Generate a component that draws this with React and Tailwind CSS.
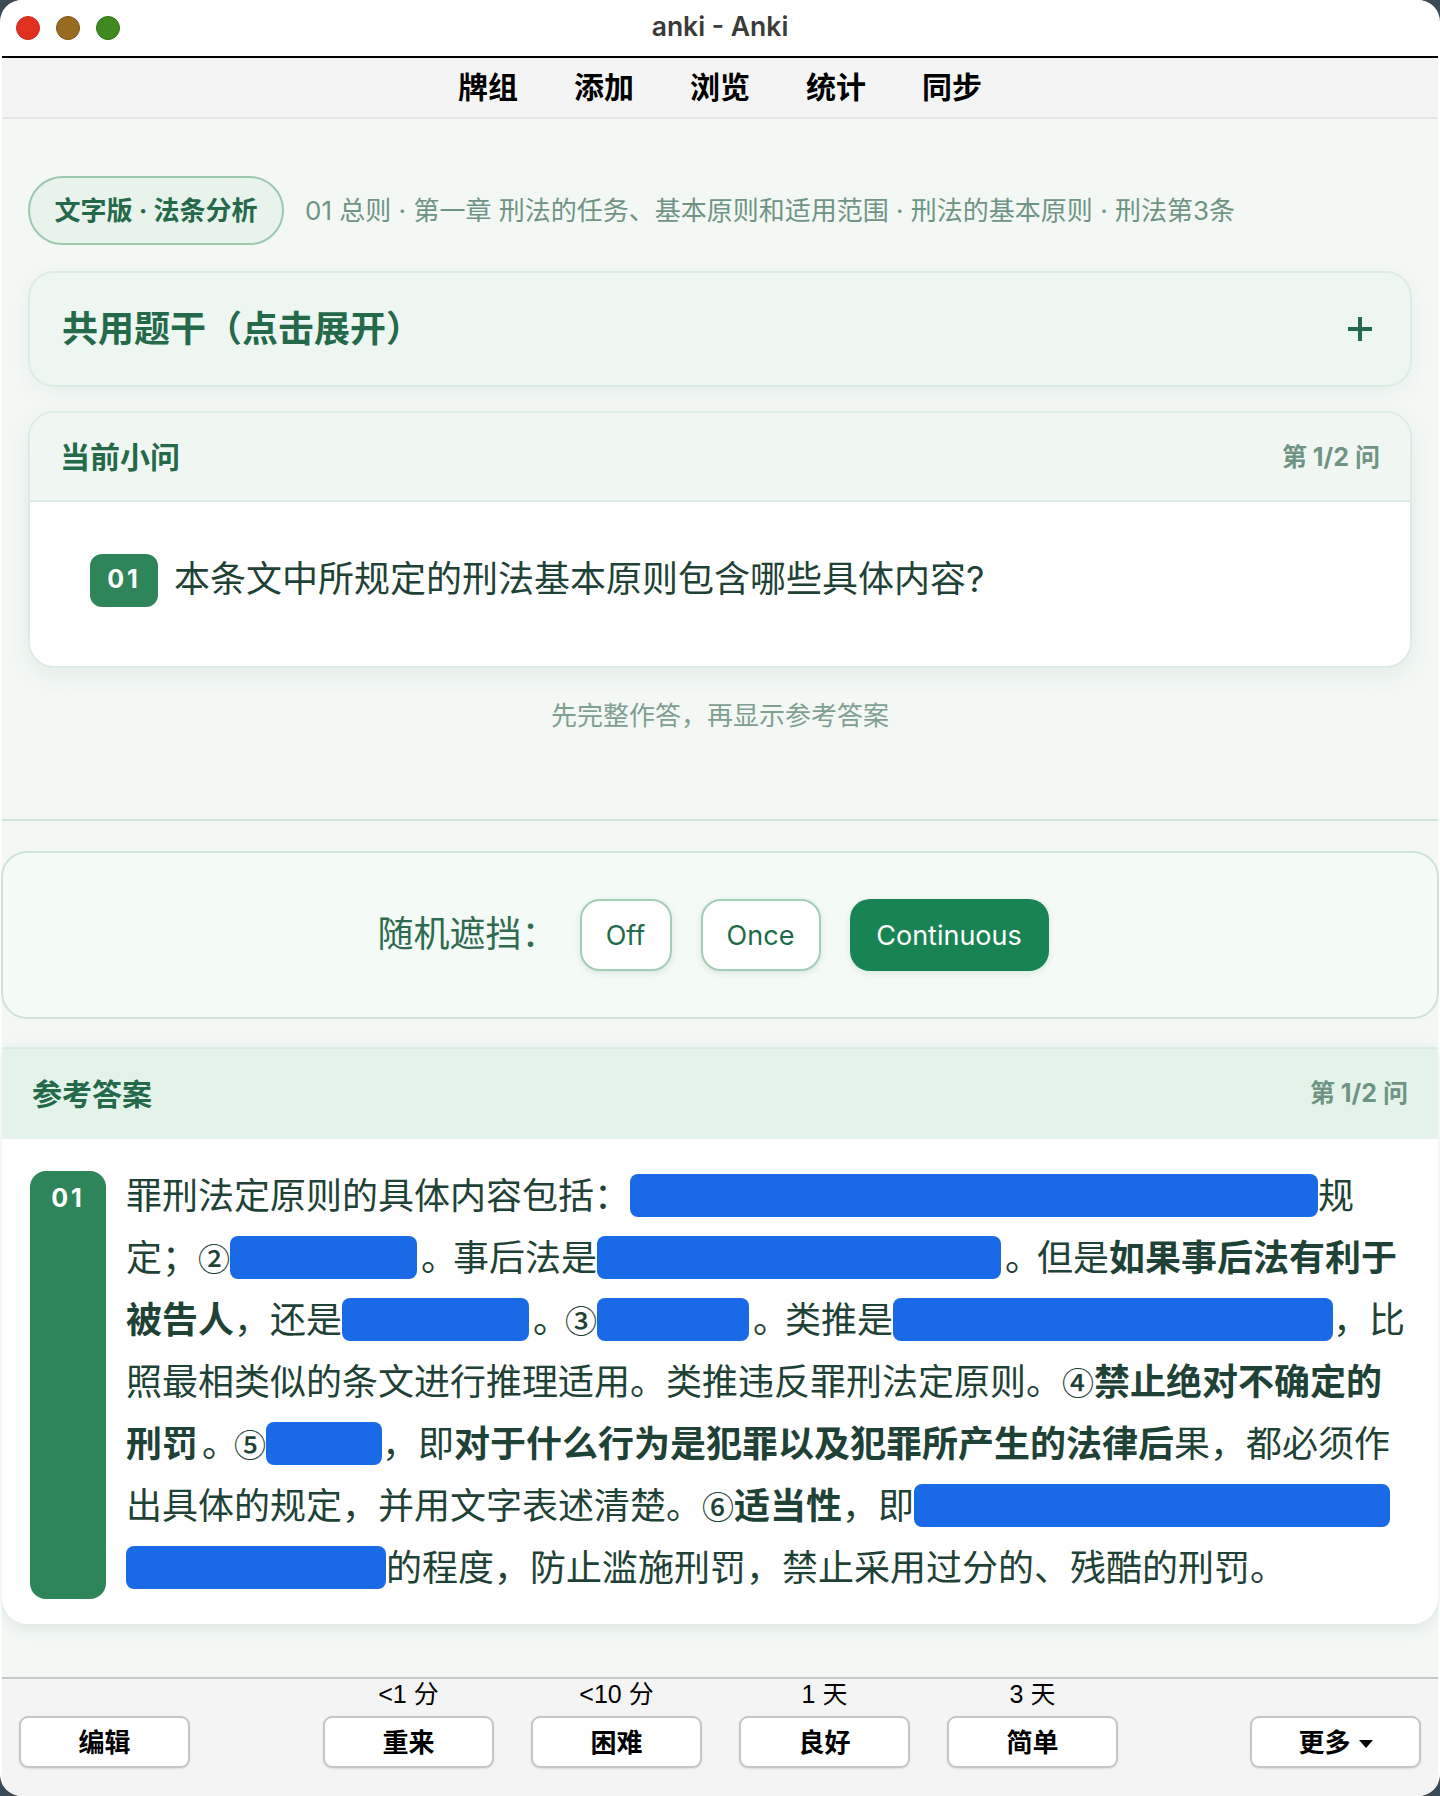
const cjk = "font-['Inter','Noto_Sans_CJK_SC',sans-serif]";

function Blank({ className }) {
  return <span className={`inline-block h-[43px] rounded-[8px] bg-[#1a6ae8] align-[-8px] ${className}`} />;
}

function Num({ children }) {
  return (
    <span className="inline-block w-[32px] text-center font-['Noto_Sans_CJK_SC',sans-serif] text-[32px] font-medium leading-none">
      {children}
    </span>
  );
}

function Stop() {
  return <span className="inline-block w-[36px] pl-[4px]">。</span>;
}

function ChoiceButton({ label, active, className }) {
  return (
    <button
      className={`h-[72px] rounded-[20px] px-[24px] pt-[2px] text-[27px] shadow-[0_2px_6px_rgba(30,80,60,0.12)] ${
        active ? "bg-[#188454] text-white" : "border-2 border-[#a3cdb4] bg-white text-[#1f6a4a]"
      } ${className}`}
    >
      {label}
    </button>
  );
}

function BarButton({ children }) {
  return (
    <button className="flex h-[52px] w-[171px] items-center justify-center rounded-[9px] border-2 border-[#c6c6c6] bg-white text-[26px] font-semibold text-black shadow-[0_1px_2px_rgba(0,0,0,0.1)]">
      {children}
    </button>
  );
}

function Answer({ due, label }) {
  return (
    <div className="flex w-[171px] flex-col items-center">
      <div className="flex h-[37px] items-center pb-[6px] font-['Liberation_Sans','Noto_Sans_CJK_SC',sans-serif] text-[25px] leading-none text-black">
        {due}
      </div>
      <BarButton>{label}</BarButton>
    </div>
  );
}

export default function App() {
  return (
    <div className={`h-[1796px] w-[1440px] overflow-hidden bg-[#3c4a55] ${cjk}`}>
      <div className="flex h-full flex-col overflow-hidden rounded-[22px] bg-white pl-[2px] pr-[2px]">
        {/* title bar */}
        <div className="relative flex h-[56px] shrink-0 items-center justify-center bg-white pb-[3px]">
          <div className="absolute left-[14px] top-[16px] flex gap-[16px]">
            <span className="h-[24px] w-[24px] rounded-full border border-[#c9281c] bg-[#e0301e]" />
            <span className="h-[24px] w-[24px] rounded-full border border-[#7d5513] bg-[#986c20]" />
            <span className="h-[24px] w-[24px] rounded-full border border-[#2f6f18] bg-[#3f8a1f]" />
          </div>
          <span className="text-[26.5px] font-semibold text-[#3b3b3b]">anki - Anki</span>
        </div>
        <div className="h-[2px] shrink-0 bg-black" />

        {/* menu */}
        <nav className="flex h-[61px] shrink-0 items-center justify-center gap-[56px] border-b-2 border-[#e4e4e4] bg-[#f4f4f4] text-[30px] font-bold text-black">
          <span>牌组</span>
          <span>添加</span>
          <span>浏览</span>
          <span>统计</span>
          <span>同步</span>
        </nav>

        {/* question area */}
        <main className="flex h-[702px] shrink-0 flex-col border-b-2 border-[#d3e3da] bg-[#f3f8f5] px-[26px] pt-[57px]">
          <div className="flex items-center gap-[21px]">
            <div className="flex h-[69px] w-[256px] items-center justify-center rounded-full border-2 border-[#9cc9ae] bg-[#e8f3ec] text-[26px] font-bold text-[#24694a]">
              文字版 · 法条分析
            </div>
            <div className="text-[26px] text-[#6f9484]">
              01 总则 · 第一章 刑法的任务、基本原则和适用范围 · 刑法的基本原则 · 刑法第3条
            </div>
          </div>

          <div className="mt-[26px] flex h-[116px] items-center justify-between rounded-[26px] border-2 border-[#dcebe4] bg-[#edf6f1] pl-[32px] pr-[38px] shadow-[0_6px_20px_rgba(30,80,60,0.05)]">
            <span className="text-[36px] font-bold text-[#24694a]">共用题干（点击展开）</span>
            <svg width="24" height="24" viewBox="0 0 24 24" className="text-[#24694a]">
              <path d="M12 0v24M0 12h24" stroke="currentColor" strokeWidth="4" fill="none" />
            </svg>
          </div>

          <div className="mt-[24px] overflow-hidden rounded-[26px] border-2 border-[#dcebe4] bg-white shadow-[0_8px_24px_rgba(30,80,60,0.07)]">
            <div className="flex h-[89px] items-center justify-between border-b-2 border-[#dcebe4] bg-[#f0f7f3] px-[30px] pt-[2px]">
              <span className="text-[30px] font-bold text-[#24694a]">当前小问</span>
              <span className="text-[25px] font-bold text-[#6f9484]">第 1/2 问</span>
            </div>
            <div className="flex h-[164px] items-center gap-[16px] pb-[8px] pl-[60px]">
              <span className="flex h-[53px] w-[68px] items-center justify-center rounded-[12px] bg-[#2e8559] text-[25px] font-bold tracking-[3px] text-white">
                01
              </span>
              <span className="mb-[2px] text-[36px] text-[#1f4236]">本条文中所规定的刑法基本原则包含哪些具体内容?</span>
            </div>
          </div>

          <div className="mt-[28px] text-center text-[26px] text-[#7f9f90]">先完整作答，再显示参考答案</div>
        </main>

        {/* review area */}
        <section className="flex min-h-0 flex-1 flex-col bg-[#f3f8f5]">
          <div className="-mx-[1px] mt-[30px] flex h-[168px] items-center justify-center rounded-[26px] border-2 border-[#cfe3d7] bg-[#f4faf6] pr-[14px]">
            <span className="mb-[2px] mr-[22px] w-[180px] text-[36px] text-[#2e6b50]">随机遮挡：</span>
            <ChoiceButton label="Off" className="mr-[29px] w-[92px]" />
            <ChoiceButton label="Once" className="mr-[29px] w-[120px]" />
            <ChoiceButton label="Continuous" active className="w-[199px]" />
          </div>

          <div className="mt-[28px] overflow-hidden rounded-b-[26px] bg-white shadow-[0_4px_16px_rgba(30,80,60,0.1)]">
            <div className="flex h-[92px] items-center justify-between border-t-2 border-[#dcebe4] bg-[#e4f3ea] px-[30px]">
              <span className="text-[30px] font-bold text-[#24694a]">参考答案</span>
              <span className="text-[25px] font-bold text-[#6f9484]">第 1/2 问</span>
            </div>
            <div className="flex gap-[20px] pb-[25px] pl-[28px] pr-[28px] pt-[32px]">
              <div className="w-[76px] shrink-0 rounded-[16px] bg-[#2e8559] pt-[9px] text-center text-[25px] font-bold tracking-[3px] text-white">
                01
              </div>
              <p className="-mt-[6px] text-[36px] leading-[62px] text-[#1f4236]">
                罪刑法定原则的具体内容包括：<Blank className="w-[688px]" />规定；<Num>②</Num>
                <Blank className="w-[187px]" />
                <Stop />事后法是<Blank className="w-[404px]" />
                <Stop />但是
                <b>如果事后法有利于被告人</b>，还是<Blank className="w-[187px]" />
                <Stop />
                <Num>③</Num>
                <Blank className="w-[152px]" />
                <Stop />类推是<Blank className="w-[440px]" />，比照最相类似的条文进行推理适用。类推违反罪刑法定原则。
                <Num>④</Num>
                <b>禁止绝对不确定的刑罚</b>
                <Stop />
                <Num>⑤</Num>
                <Blank className="w-[116px]" />，即<b>对于什么行为是犯罪以及犯罪所产生的法律后</b>
                果，都必须作出具体的规定，并用文字表述清楚。<Num>⑥</Num>
                <b>适当性</b>，即<Blank className="w-[476px]" />
                <Blank className="w-[260px]" />的程度，防止滥施刑罚，禁止采用过分的、残酷的刑罚。
              </p>
            </div>
          </div>

          {/* answer bar */}
          <div className="mt-auto flex h-[119px] items-start border-t-2 border-[#c8c8c8] bg-[#f4f4f4] pl-[17px] pr-[17px]">
            <div className="mt-[37px]">
              <BarButton>编辑</BarButton>
            </div>
            <div className="ml-[133px] flex gap-[37px]">
              <Answer due="<1 分" label="重来" />
              <Answer due="<10 分" label="困难" />
              <Answer due="1 天" label="良好" />
              <Answer due="3 天" label="简单" />
            </div>
            <div className="ml-auto mt-[37px]">
              <BarButton>
                更多
                <span className="ml-[8px] mt-[4px] h-0 w-0 border-x-[7px] border-t-[8px] border-x-transparent border-t-black" />
              </BarButton>
            </div>
          </div>
        </section>
      </div>
    </div>
  );
}
